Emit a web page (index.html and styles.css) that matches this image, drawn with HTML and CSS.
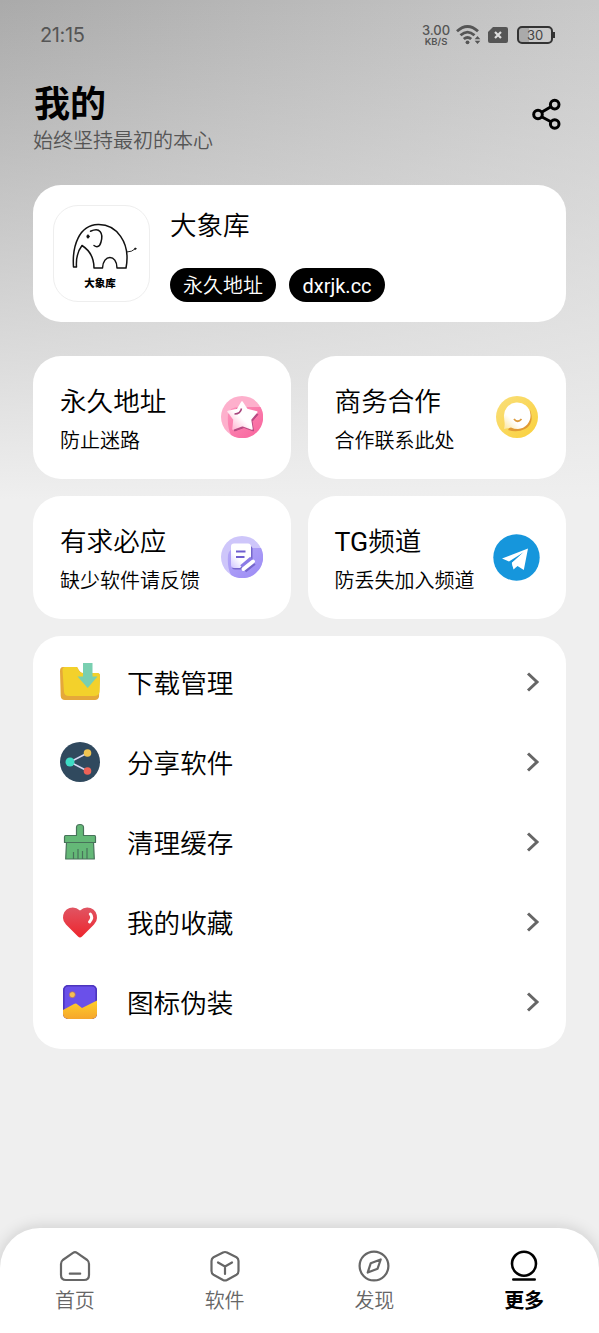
FILE: index.html
```html
<!DOCTYPE html>
<html lang="zh-CN">
<head>
<meta charset="utf-8">
<title>我的</title>
<link rel="stylesheet" href="styles.css">
</head>
<body>
<div class="screen">
  <header class="status">
    <span class="clock">21:15</span>
    <div class="indicators">
      <div class="speed"><b>3.00</b><span>KB/S</span></div>
      <svg class="wifi" width="26" height="20" viewBox="0 0 26 20" fill="none" stroke="#555" stroke-width="2.800">
        <path d="M1 6.300Q11.500-3.300 22 6.300M4.500 10.300Q11.500 4 18.500 10.300M7.800 14Q11.500 10.900 15.200 14"/>
        <circle cx="11.500" cy="17.300" r="1.900" fill="#555" stroke="none"/>
        <path d="M21.500 11l2.800 3.200h-5.600zM21.500 19l2.800-3.200h-5.600z" fill="#555" stroke="none"/>
      </svg>
      <svg class="sim" width="20" height="16" viewBox="0 0 20 16">
        <path d="M5 0H18Q20 0 20 2V14Q20 16 18 16H2Q0 16 0 14V5Z" fill="#555"/>
        <path d="M7 5l6 6M13 5l-6 6" stroke="#ddd" stroke-width="2.200"/>
      </svg>
      <div class="battery"><span>30</span></div>
    </div>
  </header>

  <div class="heading">
    <div>
      <h1>我的</h1>
      <p>始终坚持最初的本心</p>
    </div>
    <svg class="share" width="30" height="32" viewBox="0 0 30 32" fill="none" stroke="#000" stroke-width="3">
      <path d="M10 14L18.500 9M10 19L18.500 23.500"/>
      <circle cx="6" cy="16.500" r="4.300"/><circle cx="22.700" cy="6.600" r="4.300"/><circle cx="22.700" cy="26" r="4.300"/>
    </svg>
  </div>

  <main class="content">
    <section class="card profile">
      <div class="logo">
        <svg width="66" height="50" viewBox="0 0 66 50" fill="none" stroke="#111" stroke-width="1.500" stroke-linejoin="round" stroke-linecap="round">
          <path d="M2.500 46C1 25 8 4 27 3.500C45 3 60 21 55 47H46C46 33 32 33 31.500 47H23C23 37 18 29 11 24.500C6 31 5 39 5.500 46Z"/>
          <path d="M19.500 10.300C29 6 32.500 12 30 21C28.500 27 25 26 23 24.500"/>
          <ellipse cx="17" cy="15.500" rx="1.200" ry="1.700" fill="#111" stroke-width=".7"/>
          <path d="M56 31Q61 31 64 28" stroke-width=".9"/><circle cx="64.300" cy="27.700" r=".8" fill="#111" stroke-width=".6"/>
        </svg>
        <span>大象库</span>
      </div>
      <div class="profile-info">
        <h2>大象库</h2>
        <div class="tags"><span>永久地址</span><span class="latin">dxrjk.cc</span></div>
      </div>
    </section>

    <section class="tiles">
      <div class="card tile">
        <div><h3>永久地址</h3><p>防止迷路</p></div>
        <svg class="tile-icon" width="42" height="42" viewBox="0 0 42 42">
          <defs>
            <linearGradient id="pink" x2="1" y2="1"><stop offset=".1" stop-color="#fc8db7"/><stop offset=".8" stop-color="#f96ba1"/></linearGradient>
            <linearGradient id="petal" x1="0" y1="1" x2=".8" y2=".2"><stop offset=".15" stop-color="#ffbfd8"/><stop offset=".55" stop-color="#fff"/></linearGradient>
          </defs>
          <circle cx="21" cy="21" r="21" fill="#fdb0cc"/>
          <path d="M7 18Q9 11 18 11H39.500A21 21 0 0 1 10 39Q6 31 7 18Z" fill="url(#pink)"/>
          <path d="M22.500 8.500L27.500 15.500L37 18.500L31 25.500L32.500 35L23 31.500L13.500 35L14.500 25L8.500 18Z" fill="#b94b83" stroke="#b94b83" stroke-linejoin="round"/>
          <path d="M21 6L26 13.500L35.800 16L29.500 23.500L31 33L21.500 29.500L12 33L13 23.500L7 15.500L16.500 13.500Z" fill="url(#petal)" stroke="url(#petal)" stroke-width="1.500" stroke-linejoin="round"/>
          <path d="M13.500 18q6 0 7-5.500" fill="none" stroke="#a8447c" stroke-width="1.500"/>
        </svg>
      </div>
      <div class="card tile">
        <div><h3>商务合作</h3><p>合作联系此处</p></div>
        <svg class="tile-icon" width="42" height="42" viewBox="0 0 42 42">
          <defs>
            <linearGradient id="gold" x2="1" y2="1"><stop stop-color="#f9df7b"/><stop offset="1" stop-color="#fad03b"/></linearGradient>
            <linearGradient id="bubble" x1="0" y1="1" x2=".7" y2=".2"><stop stop-color="#fbe49a"/><stop offset=".45" stop-color="#fff"/></linearGradient>
          </defs>
          <circle cx="21" cy="21" r="21" fill="url(#gold)"/>
          <path d="M34 14Q39 27 29 33Q21 37 12 34L14 31Z" fill="#e09a35"/>
          <path d="M8 21A13.300 13.300 0 1 1 22 33Q18 33 15 31.500L8 33Q9 29 8.500 26Z" fill="url(#bubble)"/>
          <path d="M18 23q3.500 4.500 7.500 0" fill="none" stroke="#dc9a3c" stroke-width="1.800"/>
        </svg>
      </div>
      <div class="card tile">
        <div><h3>有求必应</h3><p>缺少软件请反馈</p></div>
        <svg class="tile-icon" width="42" height="42" viewBox="0 0 42 42">
          <defs>
            <linearGradient id="violet" x2="1" y2="1"><stop stop-color="#b5a8f7"/><stop offset="1" stop-color="#9b8af5"/></linearGradient>
            <linearGradient id="sheet" x1="0" y1="1" x2=".6" y2=".3"><stop stop-color="#d0c6ff"/><stop offset=".6" stop-color="#fff"/></linearGradient>
          </defs>
          <circle cx="21" cy="21" r="21" fill="#cec6fa"/>
          <path d="M7 19Q8 12 17 12H40A21 21 0 0 1 10 39Q6 31 7 19Z" fill="url(#violet)"/>
          <path d="M12 10H28.500Q31.500 10 31.500 13V24L21.500 33.500H14Q11 33.500 11 31Z" fill="#7667cc"/>
          <path d="M13 7.500H27Q30 7.500 30 11V22L19 32H13Q10 32 10 29V10.500Q10 7.500 13 7.500Z" fill="url(#sheet)"/>
          <path d="M15 15.500h9.500M15 21h8.500" stroke="#6f5fcf" stroke-width="2"/>
          <path d="M21.500 32L31.500 23.500" stroke="#8b7be6" stroke-width="7"/>
          <path d="M24 35L33.500 27.500" stroke="#7566cc" stroke-width="3.500"/><path d="M22.500 33L32 25.500" stroke="#fff" stroke-width="4" stroke-linecap="round"/>
        </svg>
      </div>
      <div class="card tile">
        <div><h3><span class="latin">TG</span>频道</h3><p>防丢失加入频道</p></div>
        <svg class="telegram" width="47" height="47" viewBox="0 0 47 47">
          <circle cx="23.500" cy="23.500" r="23.200" fill="#1696dc"/>
          <path d="M9 24.500L35 14.500L30.800 36L24.500 32L20.500 35.500L18.800 29L31 18L16 27.500Z" fill="#fff"/>
          <path d="M20 33L19 28.800L32 17L31 29L24.500 32Z" fill="#fff"/>
        </svg>
      </div>
    </section>

    <section class="card menu">
      <div class="row">
        <svg class="row-icon" viewBox="0 0 40 40">
          <path d="M3 5H17Q20 11 23 11H37Q40 11 40 14L39 35Q38 38 35 38H5Q1 38 .7 34L0 9Q0 5 3 5Z" fill="#e5a83a"/>
          <path d="M5 5H16Q18 5 18.500 8Q20 11 23 11H37Q40 11 40 14L39.500 30Q39 34 34 34H9Q4.500 34 4 30L2.500 8Q2.500 5 5 5Z" fill="#f3d12b"/>
          <path d="M23 1H32.500V14.500H37.500L27.700 26L17.500 14.500H23Z" fill="#79cfb0"/>
        </svg>
        <span>下载管理</span>
        <svg class="chevron" viewBox="0 0 14 20"><path d="M2 1.500L11 10L2 18.500"/></svg>
      </div>
      <div class="row">
        <svg class="row-icon" viewBox="0 0 40 40">
          <circle cx="20" cy="20" r="20" fill="#30495e"/>
          <path d="M27.500 11L10 20L27.500 29" fill="none" stroke="#d7d7f2" stroke-width="1.600"/>
          <circle cx="27.500" cy="11" r="3.800" fill="#f0c452"/><circle cx="10" cy="20" r="4.500" fill="#3edbc4"/><circle cx="27.500" cy="29" r="3.800" fill="#ee6257"/>
        </svg>
        <span>分享软件</span>
        <svg class="chevron" viewBox="0 0 14 20"><path d="M2 1.500L11 10L2 18.500"/></svg>
      </div>
      <div class="row">
        <svg class="row-icon" viewBox="0 0 40 40">
          <g fill="#64b877" stroke="#48725a" stroke-width="1.200" stroke-linejoin="round">
          <path d="M6.500 20H33.500L34.300 37H5.700Z"/>
          <path d="M5.500 13.500H16.500V5.500Q16.500 2.500 20 2.500T23.500 5.500V13.500H34.500Q35.500 13.500 35.500 15V20.500H4.500V15Q4.500 13.500 5.500 13.500Z"/>
          <path d="M13.500 37V30M18 37V27M22.500 37V29M27 37V26" fill="none"/></g>
        </svg>
        <span>清理缓存</span>
        <svg class="chevron" viewBox="0 0 14 20"><path d="M2 1.500L11 10L2 18.500"/></svg>
      </div>
      <div class="row">
        <svg class="row-icon" viewBox="0 0 40 40">
          <defs><linearGradient id="heart" x2="0" y2="1"><stop stop-color="#e05563"/><stop offset="1" stop-color="#ee252d"/></linearGradient></defs>
          <path d="M20 8.500Q25 4 30.500 6Q37 8.500 37 16Q37 19.500 34 22.500L22 34.500Q20 36.500 18 34.500L6 22.500Q3 19.500 3 16Q3 8.500 9.500 6Q15 4 20 8.500Z" fill="url(#heart)"/>
          <path d="M30.300 12Q33.500 15.500 29.500 20" fill="none" stroke="#fff" stroke-width="3" stroke-linecap="round"/>
        </svg>
        <span>我的收藏</span>
        <svg class="chevron" viewBox="0 0 14 20"><path d="M2 1.500L11 10L2 18.500"/></svg>
      </div>
      <div class="row">
        <svg class="row-icon" viewBox="0 0 40 40">
          <defs>
            <clipPath id="photo"><rect x="3" y="3" width="34" height="34" rx="5"/></clipPath>
            <linearGradient id="sand" x2="0" y2="1"><stop stop-color="#ffcf2b"/><stop offset="1" stop-color="#f5a62c"/></linearGradient>
          </defs>
          <g clip-path="url(#photo)"><rect x="3" y="3" width="34" height="34" fill="#6a50ea"/>
          <rect x="3.700" y="3.700" width="32.600" height="32.600" rx="4.500" fill="none" stroke="#4c35bd" stroke-width="1.800"/>
          <path d="M3 28L14 22Q16 21 17.500 22.500L22 26L37 18.500V37H3Z" fill="url(#sand)"/>
          <circle cx="12.300" cy="12.700" r="3" fill="#f7bf52" stroke="#a66b65" stroke-width=".7"/></g>
        </svg>
        <span>图标伪装</span>
        <svg class="chevron" viewBox="0 0 14 20"><path d="M2 1.500L11 10L2 18.500"/></svg>
      </div>
    </section>
  </main>

  <nav class="tabs">
    <div class="tab">
      <svg viewBox="0 0 32 32"><path d="M14 2.800Q16 1.500 18 2.800L28.200 10Q30 11.500 30 14V25Q30 30 25 30H7Q2 30 2 25V14Q2 11.500 3.800 10ZM10.800 23.700H21.200"/></svg>
      <span>首页</span>
    </div>
    <div class="tab">
      <svg viewBox="0 0 32 32"><path d="M14 2.500Q16 1.500 18 2.500L27.500 7.300Q29.500 8.500 29.500 11V21Q29.500 23.500 27.500 24.700L18 30Q16 31 14 30L4.500 24.700Q2.500 23.500 2.500 21V11Q2.500 8.500 4.500 7.300ZM9 12.500L16 16.500L23 12.500M16 16.500V24"/></svg>
      <span>软件</span>
    </div>
    <div class="tab">
      <svg viewBox="0 0 32 32"><circle cx="16" cy="16" r="14.400"/><path d="M22.700 9.500L19.600 18.700L9.700 22.500L12.700 13.300Z"/></svg>
      <span>发现</span>
    </div>
    <div class="tab active">
      <svg viewBox="0 0 32 32"><circle cx="16" cy="13.700" r="12"/><path d="M5.300 29.500H26.700"/></svg>
      <span>更多</span>
    </div>
  </nav>
</div>
</body>
</html>
```
FILE: styles.css
```css
* { box-sizing: border-box; }
body, h1, h2, h3, p { margin: 0; }
body { font-family: Roboto, "Noto Sans CJK SC", sans-serif; font-weight: 350; color: #000; }
svg { display: block; flex: none; }
.latin { font-weight: 400; }
.screen {
  width: 599px; height: 1333px; display: flex; flex-direction: column; overflow: hidden;
  background:
    linear-gradient(180deg, rgba(239,239,239,0), #efefef 500px),
    linear-gradient(90deg, #aaa, #c9c9c9);
}
.status { height: 70px; padding: 0 44px 0 40px; display: flex; align-items: center; justify-content: space-between; color: #555; }
.clock { font: 20px/24px Inter, sans-serif; letter-spacing: -.4px; }
.indicators { display: flex; align-items: center; }
.speed { width: 28px; display: flex; flex-direction: column; align-items: center; margin-right: 6px; font-family: Inter, sans-serif; }
.speed b { font-size: 13px; line-height: 13px; font-weight: 500; }
.speed span { font-size: 9.500px; line-height: 9px; font-weight: 600; }
.wifi { margin-right: 6px; }
.sim { margin-right: 9px; }
.battery { position: relative; width: 36px; height: 18px; border: 2px solid #333; border-radius: 5px; background: linear-gradient(90deg, #aaa 30%, transparent 30%); font: 13px/14px Inter, sans-serif; text-align: center; color: #444; margin-right: 2px; }
.battery::after { content: ""; position: absolute; right: -4px; top: 4px; width: 2px; height: 6px; background: #333; }
.heading { height: 115px; padding: 12px 37px 0 34px; display: flex; justify-content: space-between; }
.heading h1 { font-size: 36px; line-height: 46px; font-weight: 700; }
.heading p { font-size: 20px; line-height: 28px; color: #555; margin: -1px 0 0 -1px; }
.share { margin-top: 16px; }
.content { flex: 1; padding: 0 33.400px; }
.card { background: #fff; border-radius: 28px; }
.profile { height: 137px; padding: 20px; display: flex; }
.logo { width: 97px; height: 97px; border: 1.500px solid #eee; border-radius: 25px; display: flex; flex-direction: column; align-items: center; padding-top: 15px; }
.logo svg { margin-left: 4px; }
.logo span { font-size: 10.500px; font-weight: 900; line-height: 14px; margin-top: 6px; margin-left: -4px; }
.profile-info { padding: 2px 0 0 19.500px; }
.profile h2, .tile h3 { font-size: 26.600px; font-weight: inherit; line-height: 38px; }
.tags { display: flex; gap: 13px; margin-top: 23px; }
.tags span { background: #000; color: #fff; height: 34px; border-radius: 17px; padding: 0 13.200px; font-size: 20px; line-height: 37px; }
.tiles { display: grid; grid-template-columns: 1fr 1fr; gap: 17px; margin: 33.500px 0 17px; }
.tile { height: 123px; padding: 0 28px 0 26.600px; display: flex; align-items: center; justify-content: space-between; white-space: nowrap; }
.tile p { font-size: 20px; line-height: 28px; margin-top: 6px; }
.tile h3 { margin-top: 3px; }
.telegram { margin-right: -2px; margin-left: -5px; }
.menu { height: 413px; padding: 6.500px 26px 0 26.600px; }
.row { height: 80px; display: flex; align-items: center; }
.row-icon { width: 40px; height: 40px; }
.row span { flex: 1; padding-left: 27px; font-size: 26.600px; line-height: 38px; margin-top: 4px; }
.chevron { width: 14px; height: 20px; fill: none; stroke: #666; stroke-width: 3; }
.tabs { height: 105px; background: #fff; border-radius: 40px 40px 0 0; box-shadow: 0 0 16px rgba(0,0,0,.16); display: flex; padding-top: 22px; }
.tab { flex: 1; display: flex; flex-direction: column; align-items: center; color: #666; }
.tab svg { width: 32px; height: 32px; fill: none; stroke: currentColor; stroke-width: 2.200; stroke-linecap: round; stroke-linejoin: round; }
.tab span { font-size: 20px; line-height: 28px; margin-top: 5px; }
.tab.active { color: #000; }
.tab.active svg { stroke-width: 2.600; }
.tab.active span { font-weight: 700; }
```
